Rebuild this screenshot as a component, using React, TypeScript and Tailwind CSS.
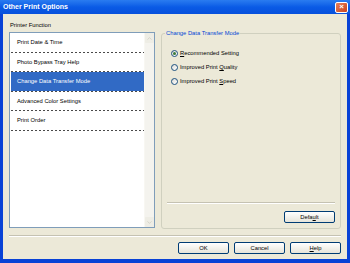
import { ChevronDown, ChevronUp } from "lucide-react";

const items = [
  { label: "Print Date & Time", h: "h-[19px]" },
  { label: "Photo Bypass Tray Help", h: "h-[18px]" },
  { label: "Change Data Transfer Mode", h: "h-[19px]", selected: true },
  { label: "Advanced Color Settings", h: "h-[18px]" },
  { label: "Print Order", h: "h-[19px]" },
];

function Radio({ checked, children }: { checked?: boolean; children: React.ReactNode }) {
  return (
    <div className="flex h-[14px] items-center gap-[2px]">
      <span className="flex h-[7px] w-[7px] items-center justify-center rounded-full border border-[#1c5180] bg-gradient-to-br from-[#dcdbd5] to-white">
        {checked && <span className="h-[3px] w-[3px] rounded-full bg-[#3a7a3a]" />}
      </span>
      <span>{children}</span>
    </div>
  );
}

function XpButton({ children, className = "" }: { children: React.ReactNode; className?: string }) {
  return (
    <button
      type="button"
      className={`flex h-[12px] w-[51px] items-center justify-center rounded-[2px] border border-[#003c74] bg-gradient-to-b from-white to-[#e6e4da] text-[5.8px] text-black ${className}`}
    >
      {children}
    </button>
  );
}

export default function App() {
  return (
    <div
      className="flex h-[263px] w-[350px] flex-col bg-[#0842d6] text-black"
      style={{ fontFamily: '"Liberation Sans", Arial, sans-serif' }}
    >
      {/* title bar */}
      <div className="flex h-[14px] shrink-0 items-center justify-between bg-gradient-to-b from-[#2a7cf0] via-[#0a5be6] to-[#0750dc] pl-[3px] pr-[2px]">
        <span className="text-[7px] font-bold text-white">Other Print Options</span>
        <span className="flex h-[11px] w-[13px] items-center justify-center rounded-[2px] border border-white bg-gradient-to-br from-[#e8805a] to-[#c8421c] text-[8px] font-bold leading-none text-white">
          ×
        </span>
      </div>

      {/* body */}
      <div className="mx-[3px] mb-[4px] flex flex-1 flex-col bg-[#ece9d8] px-[6px] pt-[7px] text-[5.8px]">
        <div className="flex gap-[6px]">
          {/* left column */}
          <div className="flex w-[146px] flex-col">
            <div className="h-[11px] pl-[1px] leading-[8px]">Printer Function</div>
            <div className="flex h-[196px] border border-[#7f9db9] bg-white">
              <div className="flex flex-1 flex-col pl-[1px]">
                {items.map((it) => (
                  <div key={it.label}>
                    <div
                      className={`flex ${it.h} items-center pl-[6px] ${
                        it.selected ? "bg-[#316ac5] text-white" : ""
                      }`}
                    >
                      {it.label}
                    </div>
                    <div className="h-[1px] bg-[repeating-linear-gradient(to_right,#4a4a4a_0_2px,transparent_2px_4px)]" />
                  </div>
                ))}
              </div>
              <div className="flex w-[10px] flex-col justify-between border-l border-[#f8f7f2] bg-[#f4f3ee]">
                <div className="flex h-[10px] items-center justify-center rounded-[1px] bg-[#eeede5]">
                  <ChevronUp size={7} strokeWidth={2} className="text-[#c4c2b6]" />
                </div>
                <div className="flex h-[10px] items-center justify-center rounded-[1px] bg-[#eeede5]">
                  <ChevronDown size={7} strokeWidth={2} className="text-[#c4c2b6]" />
                </div>
              </div>
            </div>
          </div>

          {/* right group */}
          <div className="relative mt-[12px] flex h-[196px] flex-1 flex-col rounded-[3px] border border-[#d0d0bf] px-[5px] pt-[12px]">
            <span className="absolute -top-[4px] left-[3px] bg-[#ece9d8] px-[1px] leading-[7px] text-[#0046d5]">
              Change Data Transfer Mode
            </span>
            <div className="flex flex-col pl-[4px]">
              <Radio checked>
                <u>R</u>ecommended Setting
              </Radio>
              <Radio>
                Improved Print <u>Q</u>uality
              </Radio>
              <Radio>
                Improved Print <u>S</u>peed
              </Radio>
            </div>
            <div className="mt-auto border-t border-[#c5c2b2] border-b border-b-white" />
            <div className="flex justify-end pb-[5px] pt-[7px]">
              <XpButton>
                Defa<u>u</u>lt
              </XpButton>
            </div>
          </div>
        </div>

        <div className="mt-[6px] border-t border-[#c5c2b2] border-b border-b-white" />

        <div className="mt-[5px] flex justify-end gap-[5px]">
          <XpButton>OK</XpButton>
          <XpButton>Cancel</XpButton>
          <XpButton>
            <u>H</u>elp
          </XpButton>
        </div>
      </div>
    </div>
  );
}
